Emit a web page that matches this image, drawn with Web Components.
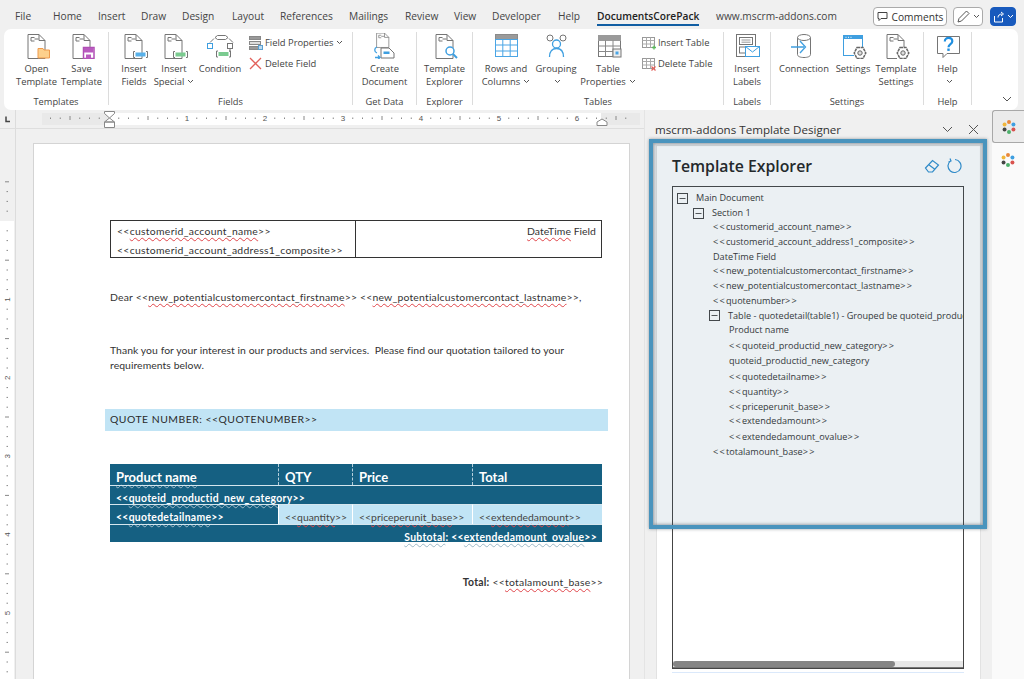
<!DOCTYPE html>
<html lang="en">
<head>
<meta charset="utf-8">
<title>mscrm-addons Template Designer</title>
<style>
  html, body { margin: 0; height: 100%; overflow: hidden; }
  body { width: 1024px; height: 679px; background: #f0f0f0; font-family: "Open Sans", "Noto Sans", sans-serif; color: #444; }
  .row { display: flex; height: 569px; }
</style>
</head>
<body>
<word-tabs></word-tabs>

<word-ribbon>
  <rb-group label="Templates" width="105" pad="10">
    <rb-button icon="open" width="45">Open<br>Template</rb-button>
    <rb-button icon="save" width="45">Save<br>Template</rb-button>
  </rb-group>
  <rb-group label="Fields" width="244" pad="5">
    <rb-button icon="insertField" width="40">Insert<br>Fields</rb-button>
    <rb-button icon="insertSpecial" width="40" caret>Insert<br>Special</rb-button>
    <rb-button icon="condition" width="52">Condition</rb-button>
    <rb-stack>
      <rb-small icon="fieldProps" caret>Field Properties</rb-small>
      <rb-small icon="deleteField">Delete Field</rb-small>
    </rb-stack>
  </rb-group>
  <rb-group label="Get Data" width="64">
    <rb-button icon="createDoc" width="63">Create<br>Document</rb-button>
  </rb-group>
  <rb-group label="Explorer" width="56">
    <rb-button icon="explorer" width="55">Template<br>Explorer</rb-button>
  </rb-group>
  <rb-group label="Tables" width="251" pad="1">
    <rb-button icon="rowsCols" width="64" caret>Rows and<br>Columns</rb-button>
    <rb-button icon="grouping" width="36" caret>Grouping<br></rb-button>
    <rb-button icon="tableProps" width="68" caret>Table<br>Properties</rb-button>
    <rb-stack style="margin-left:-1px">
      <rb-small icon="insertTable">Insert Table</rb-small>
      <rb-small icon="deleteTable">Delete Table</rb-small>
    </rb-stack>
  </rb-group>
  <rb-group label="Labels" width="47">
    <rb-button icon="labels" width="46">Insert<br>Labels</rb-button>
  </rb-group>
  <rb-group label="Settings" width="153">
    <rb-button icon="connection" width="66">Connection</rb-button>
    <rb-button icon="settings" width="32">Settings</rb-button>
    <rb-button icon="templateSettings" width="54">Template<br>Settings</rb-button>
  </rb-group>
  <rb-group label="Help" width="48">
    <rb-button icon="help" width="47" caret>Help<br></rb-button>
  </rb-group>
</word-ribbon>

<div class="row">
  <doc-area>
    <doc-page>
      <address-table></address-table>
      <letter-para top="31.5" track=".2">Dear &lt;&lt;<spell-word>new_potentialcustomercontact_firstname</spell-word>&gt;&gt; &lt;&lt;<spell-word>new_potentialcustomercontact_lastname</spell-word>&gt;&gt;,</letter-para>
      <letter-para top="38" track=".06">Thank you for your interest in our products and services.&nbsp; Please find our quotation tailored to your requirements below.</letter-para>
      <quote-banner>QUOTE NUMBER: &lt;&lt;QUOTENUMBER&gt;&gt;</quote-banner>
      <quote-table></quote-table>
      <total-line></total-line>
    </doc-page>
  </doc-area>

  <designer-pane title-text="mscrm-addons Template Designer">
    <tree-node label="Main Document" toggle>
      <tree-node label="Section 1" toggle>
        <tree-node label="&lt;&lt;customerid_account_name&gt;&gt;"></tree-node>
        <tree-node label="&lt;&lt;customerid_account_address1_composite&gt;&gt;"></tree-node>
        <tree-node label="DateTime Field"></tree-node>
        <tree-node label="&lt;&lt;new_potentialcustomercontact_firstname&gt;&gt;"></tree-node>
        <tree-node label="&lt;&lt;new_potentialcustomercontact_lastname&gt;&gt;"></tree-node>
        <tree-node label="&lt;&lt;quotenumber&gt;&gt;"></tree-node>
        <tree-node label="Table - quotedetail(table1) - Grouped be quoteid_productid_new_category" toggle>
          <tree-node label="Product name"></tree-node>
          <tree-node label="&lt;&lt;quoteid_productid_new_category&gt;&gt;" nudge="1"></tree-node>
          <tree-node label="quoteid_productid_new_category"></tree-node>
          <tree-node label="&lt;&lt;quotedetailname&gt;&gt;" nudge="2"></tree-node>
          <tree-node label="&lt;&lt;quantity&gt;&gt;"></tree-node>
          <tree-node label="&lt;&lt;priceperunit_base&gt;&gt;"></tree-node>
          <tree-node label="&lt;&lt;extendedamount&gt;&gt;"></tree-node>
          <tree-node label="&lt;&lt;extendedamount_ovalue&gt;&gt;" nudge="1"></tree-node>
        </tree-node>
        <tree-node label="&lt;&lt;totalamount_base&gt;&gt;"></tree-node>
      </tree-node>
    </tree-node>
  </designer-pane>

  <side-rail></side-rail>
</div>

<script>
// ---- icons, all drawn on a 28x26 box unless noted
const G = '#757575';
const docBase = `<path d="M5 1.500h11l6 6v18H5z" fill="#fff" stroke="${G}"/><path d="M16 1.500v6h6" fill="none" stroke="${G}"/><path d="M11.500 4.500H8v3.500h3.500M11.500 6h4" fill="none" stroke="${G}"/>`;
const bar = (fill) => `<path d="M15 18.500h-1.500v6H15M26 18.500h1.500v6H26" fill="none" stroke="${G}"/><rect x="15.500" y="19.500" width="10" height="4" fill="${fill}"/>`;
const gear = (x, y) => `<g transform="translate(${x} ${y})" fill="none" stroke="#666"><path d="M-3-5.500h6l2.800 5.500-2.800 5.500h-6l-2.800-5.500z" stroke-width="1.500" stroke-dasharray="3 .6"/><circle r="2.200" fill="#ddd"/></g>`;
const grid = (stroke, head, cells) => `<rect x="4.500" y="2.500" width="22" height="21" fill="#fff" stroke="${stroke}"/><rect x="4.500" y="2.500" width="22" height="5" fill="${head}" stroke="${head}"/><path d="M4.500 13h22M4.500 18.500h22M11.500 7.500v16M19 7.500v16" stroke="${cells}" fill="none"/>`;
const smallGrid = `<rect x="1.500" y="2.500" width="12" height="10" fill="#fff" stroke="#999"/><path d="M1.500 5.500h12M1.500 9h12M5.500 2.500v10M9.500 2.500v10" stroke="#aaa" fill="none"/>`;
const ICONS = {
  open: docBase + `<path d="M15 15.500h5l1 1.500h5.500v8H15z" fill="#fdd08c" stroke="#ee9a4d"/>`,
  save: docBase + `<rect x="15.500" y="14.500" width="10.500" height="11" fill="#fff" stroke="#b04fb5" stroke-width="1.500"/><rect x="16" y="15" width="9.500" height="4.500" fill="#b95abf"/><rect x="18" y="21.500" width="5" height="4" fill="#b95abf"/>`,
  insertField: docBase + bar('#58b1ea'),
  insertSpecial: docBase + bar('#7bcb90'),
  condition: `<path d="M9 3.500l2.500-2h8l2.500 2-2.500 2h-8z" transform="translate(0 1)" fill="#fff" stroke="${G}"/><path d="M8 5.500L4 9.500M23 5.500l4 4M24 14v5" fill="none" stroke="${G}"/><rect x="1.500" y="10.500" width="5" height="5" fill="#fff" stroke="#3f9fe0"/><rect x="21.500" y="10.500" width="5" height="5" fill="#fff" stroke="${G}"/>` + `<g transform="translate(-3 -.5)">${bar('#7bcb90')}</g>`,
  createDoc: `<g transform="translate(2 -1) scale(.72)"><path d="M5 1.500h11l6 6v14H5z" fill="#fff" stroke="${G}"/><path d="M16 1.500v6h6" fill="none" stroke="${G}"/><path d="M11.500 4.500H8v3.500h3.500M11.500 6h4" fill="none" stroke="${G}"/></g><path d="M10 15h8l5 5v5H10z" fill="#fff" stroke="${G}"/><rect x="12.500" y="18.500" width="6" height="2.500" fill="#3f9fe0"/><path d="M6 14c-3 1-3 5 0 6M4 24.500h5M7 22.500l2 2-2 2" fill="none" stroke="#3f9fe0" stroke-width="1.300"/>`,
  explorer: docBase + `<circle cx="19" cy="18" r="4" fill="#fff" stroke="#3f9fe0" stroke-width="1.500"/><path d="M22 21l4 4" stroke="#3f9fe0" stroke-width="2"/>`,
  rowsCols: `<rect x="3.500" y="1.500" width="22" height="5" fill="#9a9a9a" stroke="#8a8a8a"/><rect x="3.500" y="6.500" width="22" height="17" fill="#fff" stroke="#4aa5e5"/><path d="M3.500 12h22M3.500 18h22M10.800 6.500v17M18.200 6.500v17" stroke="#4aa5e5" fill="none"/>`,
  grouping: `<circle cx="8" cy="5" r="3" fill="#fff" stroke="${G}"/><circle cx="21" cy="5" r="3" fill="#fff" stroke="${G}"/><path d="M11 9c1 1 1.500 1.200 3.500 1.200S17 10 18 9" fill="none" stroke="#3f9fe0" stroke-width="1.300"/><circle cx="14.500" cy="11" r="4" fill="#fff" stroke="#3f9fe0" stroke-width="1.300"/><path d="M7.500 24c0-6 3-8.500 7-8.500s7 2.500 7 8.500" fill="none" stroke="#3f9fe0" stroke-width="1.300"/>`,
  tableProps: grid('#777', '#9a9a9a', '#888') + `<rect x="19" y="16" width="8" height="8" fill="#eee" stroke="#777"/><rect x="21.500" y="18.500" width="3" height="3" fill="#4aa5e5"/>`,
  labels: `<rect x="3.500" y="1.500" width="19" height="22" fill="#fff" stroke="${G}"/><rect x="6.500" y="4.500" width="13" height="7" fill="#fff" stroke="${G}"/><path d="M8.500 7h9M8.500 9.200h9" stroke="#999"/><rect x="6.500" y="14" width="7" height="6" fill="#fff" stroke="${G}"/><rect x="12.500" y="13.500" width="14" height="10" fill="#fff" stroke="#3f9fe0"/><path d="M12.500 13.500l7 5.500 7-5.500" fill="none" stroke="#3f9fe0"/>`,
  connection: `<path d="M7.500 4.500v17c0 2 3 3 6.500 3s6.500-1 6.500-3v-17" fill="#fff" stroke="${G}"/><ellipse cx="14" cy="4.500" rx="6.500" ry="3" fill="#fff" stroke="${G}"/><path d="M1 14h13M10 8l5.500 6-5.500 6" fill="none" stroke="#3f9fe0" stroke-width="1.300"/>`,
  settings: `<rect x="4.500" y="2.500" width="19" height="20" fill="#fff" stroke="#3f9fe0"/><rect x="4.500" y="2.500" width="19" height="3.500" fill="#3f9fe0"/><path d="M6.500 4.300h1M9 4.300h1M11.500 4.300h1" stroke="#fff"/>` + `<rect x="15" y="14" width="13" height="12" fill="#fff"/>` + gear(21, 20),
  templateSettings: docBase + `<rect x="15" y="14" width="13" height="12" fill="#fff"/>` + gear(21, 20),
  help: `<path d="M3.500 3.500h22v17H13l-4 4v-4H3.500z" fill="#fff" stroke="${G}"/><path d="M10.800 8.500c0-5 7.500-4.500 7.500-.2 0 3-3.800 2.800-3.800 6" fill="none" stroke="#1f8fe0" stroke-width="2.200"/><rect x="13.300" y="15.500" width="2.400" height="2.400" fill="#1f8fe0"/>`,
  fieldProps: `<rect x="1.500" y="1.500" width="11" height="3" fill="#999" stroke="#888"/><rect x="1.500" y="6.500" width="11" height="3" fill="#ddd" stroke="#888"/><rect x="1.500" y="11.500" width="11" height="3" fill="#999" stroke="#888"/><rect x="10.500" y="10.500" width="4" height="4" fill="#bcdcf2" stroke="#5a9fd0"/>`,
  deleteField: `<path d="M2 2l11 11M13 2L2 13" stroke="#e2605a" stroke-width="1.300" fill="none"/>`,
  insertTable: smallGrid + `<path d="M11 12.500h4M13 10.500v4" stroke="#5cb85c" stroke-width="1.300"/>`,
  deleteTable: smallGrid + `<path d="M10.500 10.500l4 4M14.500 10.500l-4 4" stroke="#e2605a" stroke-width="1.200"/>`,
};
const CARET = `<svg width="7" height="5" viewBox="0 0 7 5" style="margin-left:3px;vertical-align:1px"><path d="M1 1l2.500 2.500L6 1" fill="none" stroke="#555" stroke-width="1"/></svg>`;
const FONT = '"Open Sans", "Noto Sans", sans-serif';

function shell(el, html) {
  el.attachShadow({ mode: 'open' }).innerHTML = html;
}

class WordTabs extends HTMLElement {
  constructor() {
    super();
    const tabs = [['File', 38], ['Home', 45], ['Insert', 43], ['Draw', 41], ['Design', 50], ['Layout', 48], ['References', 69],
      ['Mailings', 56], ['Review', 49], ['View', 38], ['Developer', 66], ['Help', 39], ['DocumentsCorePack', 119], ['www.mscrm-addons.com', 157]];
    shell(this, `<style>
      :host { display: flex; align-items: flex-start; height: 29px; padding-left: 15px; box-sizing: border-box; font: 10.200px ${FONT}; color: #444; }
      .tab { height: 25px; line-height: 33px; white-space: nowrap; flex: none; box-sizing: border-box; }
      .active { color: #222; font-weight: 600; }
      .active span { display: inline-block; border-bottom: 2px solid #115ea3; line-height: 33px; height: 24px; }
      button { font: inherit; color: #333; background: #fff; border: 1px solid #aaa; border-radius: 4px; height: 19px; margin-top: 7px; padding: 0; display: flex; align-items: center; justify-content: center; flex: none; box-sizing: border-box; }
      .comments { width: 74px; gap: 4px; }
      .pen { width: 30px; margin-left: 6px; gap: 3px; }
      .share { width: 26px; margin-left: 7px; background: #185abd; border-color: #185abd; gap: 2px; }
    </style>
    ${tabs.map(([t, w]) => `<div class="tab ${t === 'DocumentsCorePack' ? 'active' : ''}" style="width:${w}px"><span>${t}</span></div>`).join('')}
    <button class="comments"><svg width="11" height="11" viewBox="0 0 11 11"><path d="M1 1.500h9v6H4l-2 2v-2H1z" fill="none" stroke="#444"/></svg>Comments</button>
    <button class="pen"><svg width="14" height="14" viewBox="0 0 14 14"><path d="M2 12l1-3.500L10.500 1 13 3.500 5.500 11z" fill="none" stroke="#555"/></svg>${CARET.replace('margin-left:3px', '')}</button>
    <button class="share"><svg width="12" height="12" viewBox="0 0 12 12"><path d="M1.500 5v6h8V7M5 6.500c0-2 1.500-3.500 4-3.500M8 1l2.500 2L8 5" fill="none" stroke="#fff"/></svg>${CARET.replace('margin-left:3px', '').replace('#555', '#fff')}</button>`);
  }
}
customElements.define('word-tabs', WordTabs);

class WordRibbon extends HTMLElement {
  constructor() {
    super();
    shell(this, `<style>
      :host { display: flex; position: relative; height: 81px; margin: 0 6px 0 4px; background: #fff; border-radius: 7px; box-sizing: border-box; }
      svg { position: absolute; right: 6px; bottom: 8px; }
    </style><slot></slot>
    <svg width="10" height="6" viewBox="0 0 10 6"><path d="M1 1l4 4 4-4" fill="none" stroke="#555"/></svg>`);
  }
}
customElements.define('word-ribbon', WordRibbon);

class RbGroup extends HTMLElement {
  constructor() {
    super();
    shell(this, `<style>
      :host { display: block; position: relative; height: 81px; flex: none; box-sizing: border-box; }
      :host::after { content: ""; position: absolute; right: 0; top: 3px; bottom: 5px; border-right: 1px solid #dcdcdc; }
      .items { display: flex; align-items: flex-start; height: 66px; padding-top: 4px; box-sizing: border-box; }
      .label { text-align: center; font: 9.300px/13px ${FONT}; color: #444; padding-right: 1px; }
    </style>
    <div class="items" style="padding-left:${this.getAttribute('pad') || 0}px"><slot></slot></div>
    <div class="label">${this.getAttribute('label')}</div>`);
    this.style.width = this.getAttribute('width') + 'px';
  }
}
customElements.define('rb-group', RbGroup);

class RbButton extends HTMLElement {
  constructor() {
    super();
    shell(this, `<style>
      :host { display: flex; flex-direction: column; align-items: center; flex: none; font: 9.400px/13.500px ${FONT}; color: #444; text-align: center; white-space: nowrap; }
      svg.ic { display: block; margin-bottom: 2.500px; }
      .t { display: block; }
    </style>
    <svg class="ic" width="28" height="26" viewBox="0 0 28 26">${ICONS[this.getAttribute('icon')]}</svg>
    <span class="t"><slot></slot>${this.hasAttribute('caret') ? CARET : ''}</span>`);
    this.style.width = this.getAttribute('width') + 'px';
  }
}
customElements.define('rb-button', RbButton);

class RbStack extends HTMLElement {
  constructor() {
    super();
    shell(this, `<style>:host { display: flex; flex-direction: column; flex: none; margin-left: 2px; margin-top: -1px; }</style><slot></slot>`);
  }
}
customElements.define('rb-stack', RbStack);

class RbSmall extends HTMLElement {
  constructor() {
    super();
    shell(this, `<style>
      :host { display: flex; align-items: center; gap: 1px; height: 21px; font: 9.400px ${FONT}; color: #444; white-space: nowrap; }
    </style>
    <svg width="16" height="16" viewBox="0 0 16 16">${ICONS[this.getAttribute('icon')]}</svg>
    <span><slot></slot>${this.hasAttribute('caret') ? CARET : ''}</span>`);
  }
}
customElements.define('rb-small', RbSmall);

class DocArea extends HTMLElement {
  constructor() {
    super();
    // ruler: zero at x=109, one inch is 78px
    let marks = '';
    for (let i = -7; i <= 55; i++) {
      const x = 109 + i * 9.75;
      if (x < 42 || x > 632) continue;
      if (i === 0) continue;
      if (i % 8 === 0) marks += `<text x="${x}" y="8" text-anchor="middle" font-size="8" fill="#555" font-family="Liberation Sans">${Math.abs(i / 8)}</text>`;
      else if (i % 4 === 0) marks += `<path d="M${x} 3v4" stroke="#888"/>`;
      else marks += `<path d="M${x} 4.500v1.500" stroke="#888"/>`;
    }
    let vmarks = '';
    for (let i = -4; i <= 46; i++) {
      const y = 92 + i * 9.8;
      if (i === 0) continue;
      if (i % 8 === 0) vmarks += `<text x="7" y="${y + 3}" text-anchor="middle" font-size="8" fill="#555" font-family="Liberation Sans" transform="rotate(-90 7 ${y})">${Math.abs(i / 8)}</text>`;
      else if (i % 4 === 0) vmarks += `<path d="M5 ${y}h4" stroke="#888"/>`;
      else vmarks += `<path d="M6.500 ${y}h1.500" stroke="#888"/>`;
    }
    shell(this, `<style>
      :host { display: flex; flex-direction: column; width: 644px; flex: none; height: 569px; overflow: hidden; }
      .ruler { height: 18px; flex: none; display: flex; border-bottom: 1px solid #dedede; box-sizing: content-box; }
      .corner { width: 16px; border-right: 1px solid #dcdcdc; box-sizing: border-box; position: relative; flex: none; }
      .corner svg { position: absolute; left: 3px; top: 5px; }
      .track { position: relative; flex: 1; }
      .track svg.marks { display: block; position: absolute; left: -16px; top: 3px; }
      .white { position: absolute; left: 93px; width: 492px; top: 3px; height: 12px; background: #fff; }
      .grey { position: absolute; left: 26px; width: 598px; top: 3px; height: 12px; background: #e9e9e9; }
      .marker { position: absolute; left: 88px; top: 1px; }
      .marker2 { position: absolute; left: 580px; top: 8px; }
      .body { flex: 1; display: flex; min-height: 0; }
      .vruler { width: 16px; flex: none; border-right: 1px solid #dcdcdc; box-sizing: border-box; position: relative; }
      .vruler .w { position: absolute; left: 0; right: 1px; top: 92px; bottom: 0; background: #fff; }
      .vruler svg { position: absolute; left: 0; top: 0; }
      .scroll { flex: 1; padding: 14px 0 0 17px; min-width: 0; }
    </style>
    <div class="ruler">
      <div class="corner"><svg width="10" height="10" viewBox="0 0 10 10"><path d="M3 1.500v5h4" fill="none" stroke="#444" stroke-width="1.500"/></svg></div>
      <div class="track">
        <div class="grey"></div><div class="white"></div>
        <svg class="marks" width="644" height="12" viewBox="0 0 644 12">${marks}</svg>
        <svg class="marker" width="11" height="17" viewBox="0 0 11 17"><path d="M.5.500h10v2L5.500 7 .5 2.500zM5.500 7l5 4H.5zM.5 11h10v5.500H.5z" fill="#fff" stroke="#888"/></svg>
        <svg class="marker2" width="12" height="8" viewBox="0 0 12 8"><path d="M1 7.500V4l5-3 5 3v3.500z" fill="#fff" stroke="#888"/></svg>
      </div>
    </div>
    <div class="body">
      <div class="vruler"><div class="w"></div><svg width="15" height="551" viewBox="0 0 15 551">${vmarks}</svg></div>
      <div class="scroll"><slot></slot></div>
    </div>`);
  }
}
customElements.define('doc-area', DocArea);

class DocPage extends HTMLElement {
  constructor() {
    super();
    shell(this, `<style>
      :host { display: block; width: 597px; min-height: 620px; box-sizing: border-box; background: #fff; border: 1px solid #d4d4d4; padding: 76px 28px 0 76px;
        font: 10.400px/15px Lato, "Open Sans", sans-serif; color: #333; }
    </style><slot></slot>`);
  }
}
customElements.define('doc-page', DocPage);

class SpellWord extends HTMLElement {
  constructor() {
    super();
    shell(this, `<style>:host { display: inline; text-decoration: underline wavy var(--sq, #e0454a) 1px; text-underline-offset: 2px; }</style><slot></slot>`);
  }
}
customElements.define('spell-word', SpellWord);

class AddressTable extends HTMLElement {
  constructor() {
    super();
    shell(this, `<style>
      :host { display: grid; grid-template-columns: 244px 1fr; grid-template-rows: 36px; height: 38px; border: 1px solid #333; box-sizing: border-box; width: 492px; }
      div { padding: 1px 5px 0 6px; line-height: 19px; white-space: nowrap; letter-spacing: .3px; }
      .r { border-left: 1px solid #333; text-align: right; letter-spacing: .05px; }
    </style>
    <div>&lt;&lt;<spell-word>customerid_account_name</spell-word>&gt;&gt;<br>&lt;&lt;customerid_account_address1_composite&gt;&gt;</div>
    <div class="r"><spell-word>DateTime</spell-word> Field</div>`);
  }
}
customElements.define('address-table', AddressTable);

class LetterPara extends HTMLElement {
  constructor() {
    super();
    shell(this, `<style>:host { display: block; width: 492px; }</style><slot></slot>`);
    this.style.marginTop = this.getAttribute('top') + 'px';
    if (this.hasAttribute('track')) this.style.letterSpacing = this.getAttribute('track') + 'px';
  }
}
customElements.define('letter-para', LetterPara);

class QuoteBanner extends HTMLElement {
  constructor() {
    super();
    shell(this, `<style>
      :host { display: block; margin: 36.500px 0 0 -5px; width: 503px; height: 22px; line-height: 21px; padding-left: 5px; box-sizing: border-box; background: #c1e4f5; letter-spacing: .5px; color: #2a2a2a; }
    </style><slot></slot>`);
  }
}
customElements.define('quote-banner', QuoteBanner);

class QuoteTable extends HTMLElement {
  constructor() {
    super();
    shell(this, `<style>
      :host { display: grid; grid-template-columns: 168px 74px 120px 130px; grid-template-rows: 21px 19px 20px 18px; width: 492px; margin-top: 33px; background: #156082; color: #fff; font-weight: 700; --sq: #9db8c6; letter-spacing: .3px; }
      div { padding-left: 6px; white-space: nowrap; box-sizing: border-box; line-height: 17px; padding-top: 4px; }
      .h { font-size: 13px; line-height: 20px; padding-top: 3px; letter-spacing: 0; }
      .h + .h { border-left: 1px dashed #b5cfdc; }
      .span { grid-column: 1 / -1; border-top: 1px solid #d5e6ee; }
      .cell { border-top: 1px solid #d5e6ee; }
      .lt { background: #c1e4f5; color: #444; font-weight: 400; --sq: #e0454a; border-left: 1px solid #fff; letter-spacing: 0; }
      .sub { text-align: right; padding-right: 5px; }
    </style>
    <div class="h"><spell-word>Product name</spell-word></div><div class="h">QTY</div><div class="h">Price</div><div class="h">Total</div>
    <div class="span">&lt;&lt;<spell-word>quoteid_productid_new_category</spell-word>&gt;&gt;</div>
    <div class="cell">&lt;&lt;<spell-word>quotedetailname</spell-word>&gt;&gt;</div>
    <div class="cell lt">&lt;&lt;<spell-word>quantity</spell-word>&gt;&gt;</div>
    <div class="cell lt">&lt;&lt;<spell-word>priceperunit_base</spell-word>&gt;&gt;</div>
    <div class="cell lt">&lt;&lt;<spell-word>extendedamount</spell-word>&gt;&gt;</div>
    <div class="span sub"><spell-word>Subtotal</spell-word>: &lt;&lt;<spell-word>extendedamount_ovalue</spell-word>&gt;&gt;</div>`);
  }
}
customElements.define('quote-table', QuoteTable);

class TotalLine extends HTMLElement {
  constructor() {
    super();
    shell(this, `<style>:host { display: block; width: 493px; margin-top: 32.500px; text-align: right; letter-spacing: .25px; } b { font-weight: 700; }</style>
      <b>Total:</b> &lt;&lt;<spell-word>totalamount_base</spell-word>&gt;&gt;`);
  }
}
customElements.define('total-line', TotalLine);

class DesignerPane extends HTMLElement {
  constructor() {
    super();
    shell(this, `<style>
      :host { display: block; position: relative; width: 348px; flex: none; height: 569px; border-left: 1px solid #e4e4e4; box-sizing: border-box; overflow: hidden; font-family: ${FONT}; }
      .head { display: flex; align-items: center; height: 33px; padding: 5px 13px 0 10px; box-sizing: border-box; font-size: 11.600px; color: #333; white-space: nowrap; }
      .head span { flex: 1; }
      .head svg { margin-left: 15px; flex: none; }
      .body { margin: 2px 11px 0 11px; height: 534px; background: #fff; border: 1px solid #e2e2e2; border-bottom: 0; padding: 5px 16px 0 15px; box-sizing: border-box; }
      .title { display: flex; align-items: center; height: 29px; margin-bottom: 6px; }
      h2 { flex: 1; margin: 0; font-size: 15.800px; font-weight: 600; color: #222; white-space: nowrap; }
      .title svg { flex: none; margin-left: 6px; }
      .title svg:last-child { margin-right: 2px; }
      .tree { position: relative; height: 483px; border: 1px solid #444; box-sizing: border-box; overflow: hidden; padding: 4px 0 0 4px; background: #fff; }
      .sb { position: absolute; left: 0; right: 0; bottom: 0; height: 7px; background: #e8e8e8; border-bottom: 1px solid #777; box-sizing: border-box; }
      .sb i { display: block; width: 222px; height: 6px; background: #858585; border-radius: 3px; }
      .line { height: 1px; margin-top: 3px; background: #dbe9fb; }
      .hl { position: absolute; left: 4px; top: 29px; width: 338px; height: 390px; box-sizing: border-box; border: 4px solid #4a94bd; background: rgba(60, 105, 135, .10);
        box-shadow: inset 0 0 3px 1px rgba(70, 80, 90, .45), 0 0 3px rgba(60, 70, 80, .5); pointer-events: none; }
    </style>
    <div class="head"><span>${this.getAttribute('title-text')}</span>
      <svg width="11" height="7" viewBox="0 0 11 7"><path d="M1 1l4.500 4.500L10 1" fill="none" stroke="#555"/></svg>
      <svg width="11" height="11" viewBox="0 0 11 11"><path d="M1 1l9 9M10 1l-9 9" fill="none" stroke="#555"/></svg>
    </div>
    <div class="body">
      <div class="title"><h2>Template Explorer</h2>
        <svg width="16" height="16" viewBox="0 0 16 16"><path d="M1.500 10l7-7.500 6 4.500-6 7h-4zM4.500 6.500l6 4.500" fill="none" stroke="#2f8fd0" stroke-width="1.200"/></svg>
        <svg width="16" height="16" viewBox="0 0 16 16"><path d="M5 2.500a6.500 6.500 0 1 0 4-1M4 .5l1 2.500-2.500 1" fill="none" stroke="#2f8fd0" stroke-width="1.200"/></svg>
      </div>
      <div class="tree"><slot></slot><div class="sb"><i></i></div></div>
      <div class="line"></div>
    </div>
    <div class="hl"></div>`);
  }
}
customElements.define('designer-pane', DesignerPane);

class TreeNode extends HTMLElement {
  constructor() {
    super();
    const esc = this.getAttribute('label').replace(/&/g, '&amp;').replace(/</g, '&lt;').replace(/>/g, '&gt;');
    const text = esc.replace(/(&lt;&lt;|&gt;&gt;)/g, '<span class="b">$1</span>');
    const toggle = this.hasAttribute('toggle');
    shell(this, `<style>
      :host { display: block; font: 9.100px/14.700px ${FONT}; color: #333; white-space: nowrap; }
      .row { display: flex; align-items: center; height: 14.700px; }
      .leaf { padding-left: 4px; }
      .b { letter-spacing: 1.300px; }
      svg { flex: none; margin-right: 8px; }
      .kids { margin-left: 16px; }
    </style>
    <div class="row ${toggle ? '' : 'leaf'}">${toggle ? '<svg width="11" height="11" viewBox="0 0 11 11"><rect x=".5" y=".5" width="10" height="10" fill="#fff" stroke="#444"/><path d="M2.500 5.500h6" stroke="#555"/></svg>' : ''}<span>${text}</span></div>
    <div class="kids"><slot></slot></div>`);
    if (this.hasAttribute('nudge')) this.style.marginTop = this.getAttribute('nudge') + 'px';
  }
}
customElements.define('tree-node', TreeNode);

class SideRail extends HTMLElement {
  constructor() {
    super();
    const ring = `<svg width="14" height="14" viewBox="0 0 12 12">
      <circle cx="6" cy="1.800" r="1.700" fill="#e8873a"/><circle cx="9.800" cy="3.800" r="1.700" fill="#3f9fe0"/><circle cx="9.800" cy="8.200" r="1.700" fill="#d9534f"/>
      <circle cx="6" cy="10.200" r="1.700" fill="#4caf6a"/><circle cx="2.200" cy="8.200" r="1.700" fill="#444"/><circle cx="2.200" cy="3.800" r="1.700" fill="#f0b63c"/></svg>`;
    shell(this, `<style>
      :host { display: block; width: 32px; flex: none; height: 569px; background: #fafafa; }
      div { display: flex; align-items: center; justify-content: center; height: 33px; box-sizing: border-box; }
      .on { background: #ebebeb; border: 1px solid #a8a8a8; border-right: 0; border-radius: 3px 0 0 3px; }
    </style><div class="on">${ring}</div><div>${ring}</div>`);
  }
}
customElements.define('side-rail', SideRail);
</script>
</body>
</html>
